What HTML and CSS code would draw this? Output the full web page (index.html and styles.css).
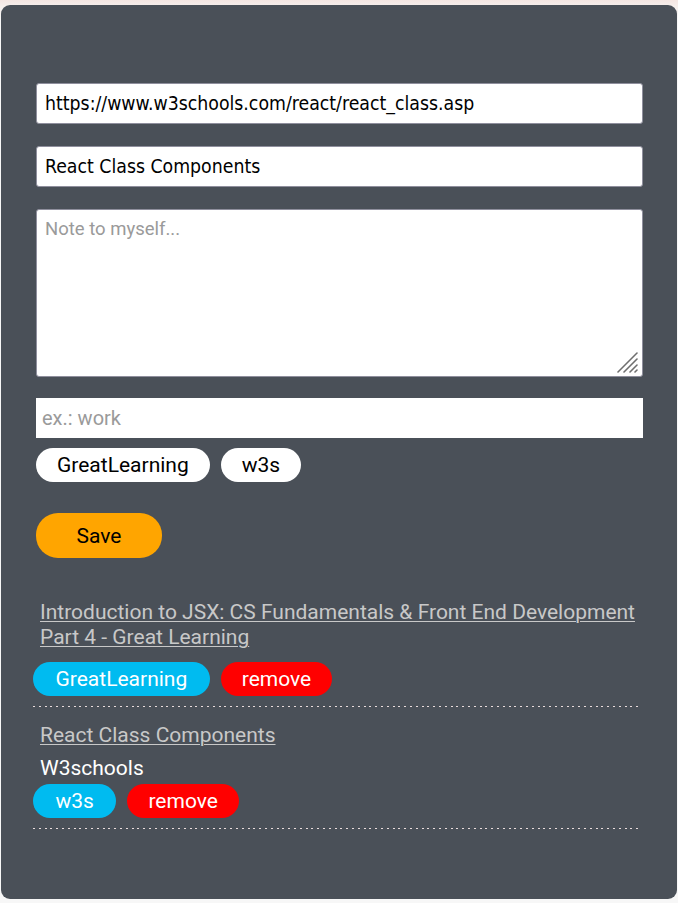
FILE: index.html
```html
<!DOCTYPE html>
<html>
<head>
<meta charset="utf-8">
<link rel="stylesheet" href="styles.css">
</head>
<body>
<div class="panel">
  <form class="form">
    <input class="field" type="text" value="https://www.w3schools.com/react/react_class.asp">
    <input class="field" type="text" value="React Class Components">
    <div class="note-wrap">
      <textarea class="note" placeholder="Note to myself..."></textarea>
      <svg class="grip" width="22" height="22" viewBox="0 0 22 22">
        <g stroke="#6f6f6f" stroke-width="1.6" stroke-linecap="round">
          <line x1="1" y1="21" x2="20" y2="2"/>
          <line x1="7" y1="21" x2="20" y2="8"/>
          <line x1="13" y1="21" x2="20" y2="14"/>
          <line x1="18" y1="21" x2="20" y2="19"/>
        </g>
      </svg>
    </div>
    <input class="taginput" type="text" placeholder="ex.: work">
    <div class="tags">
      <span class="pill white">GreatLearning</span>
      <span class="pill white">w3s</span>
    </div>
    <button class="save" type="button">Save</button>
  </form>
  <ul class="list">
    <li class="item">
      <a class="link" href="#">Introduction to JSX: CS Fundamentals &amp; Front End Development Part 4 - Great Learning</a>
      <div class="tags">
        <span class="pill blue">GreatLearning</span>
        <span class="pill red">remove</span>
      </div>
    </li>
    <li class="item">
      <a class="link" href="#">React Class Components</a>
      <div class="note-text">W3schools</div>
      <div class="tags">
        <span class="pill blue">w3s</span>
        <span class="pill red">remove</span>
      </div>
    </li>
  </ul>
</div>
</body>
</html>
```
FILE: styles.css
```css
html, body { margin: 0; padding: 0; }
body {
  background: linear-gradient(#f4e6e2 0, #f6efec 6px, #f7f7f7 20px);
  font-family: Roboto, "Noto Sans", sans-serif;
  width: 678px;
  height: 903px;
  overflow: hidden;
}
.panel {
  margin: 5px 0 0 1px;
  width: 676px;
  height: 894px;
  box-sizing: border-box;
  background: #4a5058;
  border-radius: 9px;
  padding: 78px 35px 0 35px;
}
.form { display: flex; flex-direction: column; align-items: flex-start; }
.field {
  width: 607px;
  height: 41px;
  box-sizing: border-box;
  border: 1px solid #8f8f9d;
  border-radius: 3px;
  background: #fff;
  padding: 0 8px;
  font-family: "DejaVu Sans Condensed", "DejaVu Sans", sans-serif;
  font-stretch: condensed;
  font-size: 19.3px;
  color: #000;
  margin-bottom: 22px;
  outline: none;
}
.note-wrap {
  position: relative;
  width: 607px;
  height: 168px;
  margin: 0 0 21px 0;
}
.note {
  display: block;
  width: 607px;
  height: 168px;
  box-sizing: border-box;
  border: 1px solid #8f8f9d;
  border-radius: 3px;
  padding: 8px 8px;
  font-family: Roboto, sans-serif;
  font-size: 18.5px;
  margin: 0;
  resize: none;
  outline: none;
}
.note::placeholder { color: #9a9a9a; }
.grip {
  position: absolute;
  right: 4px;
  bottom: 4px;
}
.taginput {
  width: 607px;
  height: 40px;
  box-sizing: border-box;
  border: none;
  border-radius: 0;
  padding: 0 6px;
  font-family: Roboto, sans-serif;
  font-size: 20px;
  outline: none;
}
.taginput::placeholder { color: #9a9a9a; }
.tags { display: flex; gap: 11px; margin-top: 10px; }
.pill {
  display: inline-flex;
  align-items: center;
  justify-content: center;
  height: 34px;
  padding: 0 21px;
  border-radius: 17px;
  font-size: 21px;
  line-height: 1;
}
.white { background: #fff; color: #000; }
.blue { background: #00bbf0; color: #fff; padding: 0 22.5px; }
.red { background: #ff0000; color: #fff; padding: 0 21px; }
.save {
  margin-top: 31px;
  width: 126px;
  height: 45px;
  border: none;
  border-radius: 22px;
  background: #ffa500;
  color: #000;
  font-family: Roboto, sans-serif;
  font-size: 21px;
  padding: 0;
}
.list {
  list-style: none;
  margin: 38px 0 0 -3px;
  padding: 0;
}
.item {
  padding: 4px 0 11px 0;
  margin-bottom: 12px;
  background-image: repeating-linear-gradient(to right, #e9dcdc 0 2px, transparent 2px 5.8px);
  background-size: 100% 1px;
  background-position: 0 100%;
  background-repeat: no-repeat;
}
.item .tags { margin-top: 12px; }
.link {
  display: block;
  margin-left: 7px;
  color: #c8c8c8;
  font-size: 21px;
  line-height: 25px;
  text-decoration: underline;
  text-decoration-thickness: 1px;
  text-underline-offset: 2px;
}
.note-text {
  margin: 8px 0 0 7px;
  color: #fff;
  font-size: 21px;
  line-height: 25px;
}
.item .note-text + .tags { margin-top: 3px; }
```
